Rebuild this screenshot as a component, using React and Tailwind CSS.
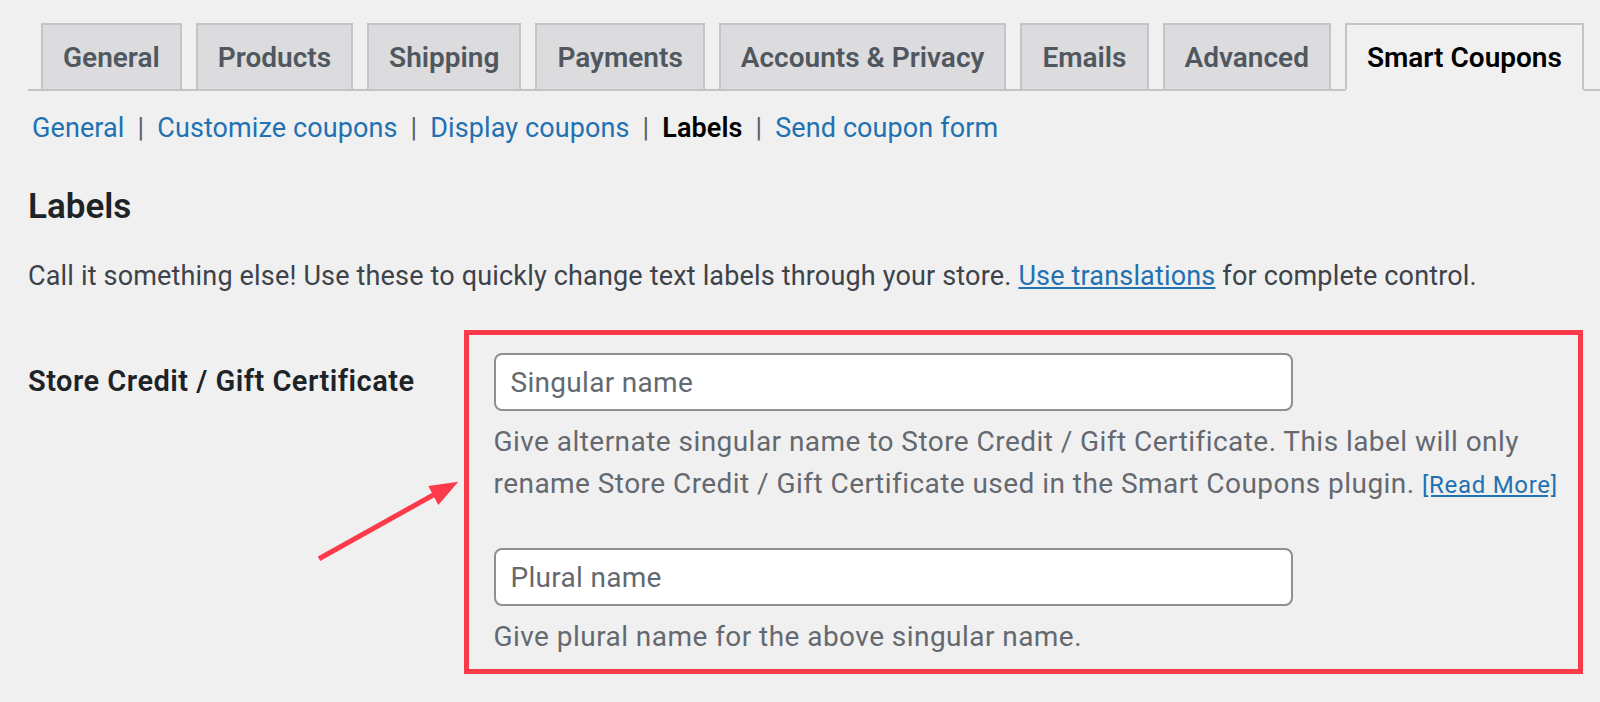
import React from "react";
import clsx from "clsx";

const tabs = [
  "General",
  "Products",
  "Shipping",
  "Payments",
  "Accounts & Privacy",
  "Emails",
  "Advanced",
  "Smart Coupons",
];

const subLinks = [
  "General",
  "Customize coupons",
  "Display coupons",
  "Labels",
  "Send coupon form",
];

const App = () => {
  return (
    <div className="relative min-h-screen overflow-hidden bg-[#f0f0f1] pl-[28px] pt-[23px] font-['Roboto',sans-serif] text-[#3c434a]">
      {/* Settings tabs */}
      <nav className="flex items-end gap-[14px] border-b-2 border-[#c3c4c7] pl-[13px]">
        {tabs.map((tab) => {
          const active = tab === "Smart Coupons";
          return (
            <a
              key={tab}
              className={clsx(
                "-mb-[2px] border-2 border-[#c3c4c7] px-[20px] pb-[7px] pt-[9px] text-[28px] font-semibold leading-[48px] whitespace-nowrap",
                active
                  ? "border-b-[#f0f0f1] bg-[#f0f0f1] text-black"
                  : "bg-[#dcdcde] text-[#50575e]"
              )}
            >
              {tab}
            </a>
          );
        })}
      </nav>

      {/* Sub navigation */}
      <ul className="mt-[17px] flex items-center pl-[4px] text-[27px] leading-[40px] tracking-[0.1px]">
        {subLinks.map((link, i) => (
          <li key={link} className="flex items-center">
            {link === "Labels" ? (
              <span className="font-semibold text-black">{link}</span>
            ) : (
              <a className="text-[#2271b1]">{link}</a>
            )}
            {i < subLinks.length - 1 && (
              <span className="mx-[13px] text-[#5a6068]">|</span>
            )}
          </li>
        ))}
      </ul>

      <h2 className="mt-[37px] text-[35px] font-semibold leading-[44px] text-[#1d2327]">
        Labels
      </h2>

      <p className="mt-[28px] text-[27px] leading-[39px] tracking-[0.17px] text-[#3c434a]">
        Call it something else! Use these to quickly change text labels through
        your store.{" "}
        <a className="text-[#2271b1] underline">Use translations</a> for
        complete control.
      </p>

      {/* Form row */}
      <div className="mt-[34px] flex items-start">
        <div className="w-[435.5px] shrink-0 pt-[33px] text-[29px] font-semibold leading-[36px] tracking-[0.48px] text-[#1d2327]">
          Store Credit / Gift Certificate
        </div>

        <div className="w-[1119px] border-[5px] border-[#fc3a4a] pb-[11px] pl-[25px] pr-[10px] pt-[18px]">
          <input
            type="text"
            placeholder="Singular name"
            className="block h-[58px] w-[799px] rounded-[8px] border-2 border-[#8c8f94] bg-white px-[15px] text-[28px] tracking-[0.3px] text-[#2c3338] outline-none placeholder:text-[#646970]"
          />
          <p className="mt-[10px] text-[28px] leading-[42px] tracking-[0.45px] text-[#646970]">
            Give alternate singular name to Store Credit / Gift Certificate.
            This label will only rename Store Credit / Gift Certificate used in
            the Smart Coupons plugin.{" "}
            <a className="text-[24px] tracking-[0.7px] text-[#2271b1] underline">
              [Read More]
            </a>
          </p>

          <input
            type="text"
            placeholder="Plural name"
            className="mt-[42px] block h-[58px] w-[799px] rounded-[8px] border-2 border-[#8c8f94] bg-white px-[15px] text-[28px] tracking-[0.3px] text-[#2c3338] outline-none placeholder:text-[#646970]"
          />
          <p className="mt-[10px] text-[28px] leading-[42px] tracking-[0.45px] text-[#646970]">
            Give plural name for the above singular name.
          </p>
        </div>
      </div>

      {/* Annotation arrow */}
      <svg
        className="pointer-events-none absolute left-0 top-0"
        width="1600"
        height="702"
        viewBox="0 0 1600 702"
      >
        <line
          x1="319"
          y1="558.7"
          x2="436"
          y2="493.5"
          stroke="#fc3a4a"
          strokeWidth="5"
        />
        <polygon points="458.3,481.7 428.3,486 438.3,505" fill="#fc3a4a" />
      </svg>
    </div>
  );
};

export default App;
